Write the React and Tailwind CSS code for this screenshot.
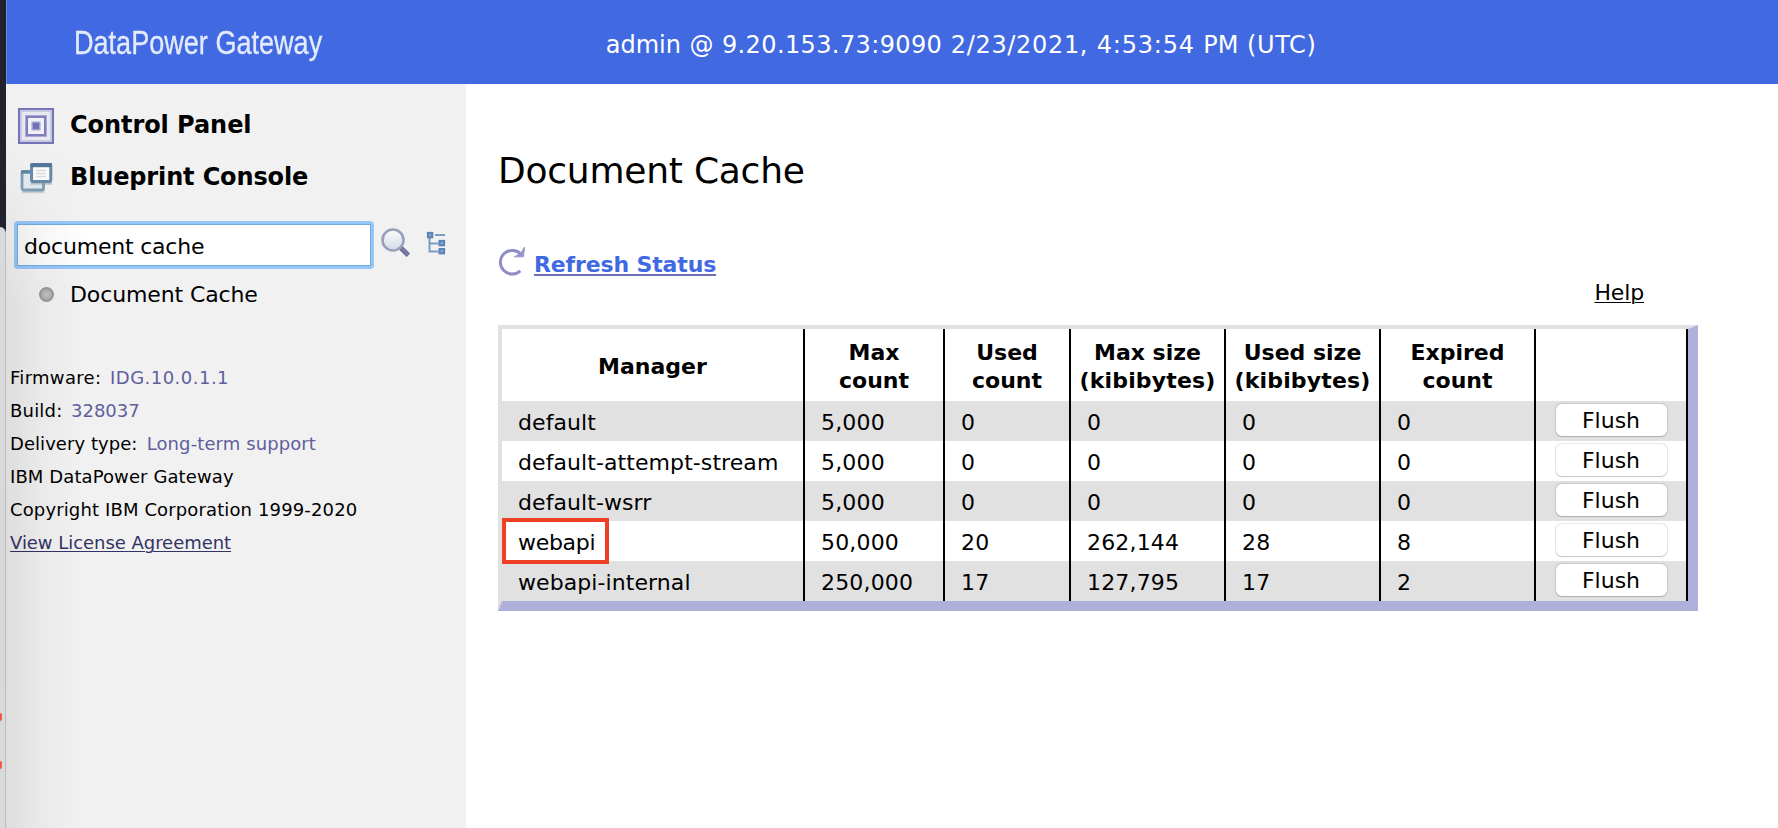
const COLUMNS = [
  ["Manager"],
  ["Max", "count"],
  ["Used", "count"],
  ["Max size", "(kibibytes)"],
  ["Used size", "(kibibytes)"],
  ["Expired", "count"],
  [],
];

const ROWS = [
  ["default", "5,000", "0", "0", "0", "0"],
  ["default-attempt-stream", "5,000", "0", "0", "0", "0"],
  ["default-wsrr", "5,000", "0", "0", "0", "0"],
  ["webapi", "50,000", "20", "262,144", "28", "8"],
  ["webapi-internal", "250,000", "17", "127,795", "17", "2"],
];

const GRID = "grid grid-cols-[303px_140px_126px_155px_155px_155px_152px]";

function ControlPanelIcon() {
  return (
    <svg className="mt-[2px] h-9 w-9 shrink-0" viewBox="0 0 36 36">
      <rect width="36" height="36" fill="#7474b8" />
      <rect x="2" y="2" width="32" height="32" fill="#c9c9e2" />
      <rect x="4" y="4" width="28" height="28" fill="#e8e8f2" />
      <rect x="7" y="7" width="22" height="22" fill="#a9a9d2" />
      <rect x="8" y="8" width="20" height="20" fill="#7e7ebd" />
      <rect x="10" y="10" width="16" height="16" fill="#f0f0f6" />
      <rect x="13.5" y="13.5" width="9" height="9" fill="#a3a3cf" />
      <rect x="15" y="15" width="6" height="6" fill="#6f6fb5" />
    </svg>
  );
}

function BlueprintIcon() {
  return (
    <svg className="mt-[4px] h-9 w-9 shrink-0" viewBox="0 0 36 36">
      <path d="M4 31h21.500v-8" fill="none" stroke="#9aa5ae" strokeOpacity=".4" strokeWidth="2.400" />
      <rect x="4" y="10.500" width="21.500" height="18.500" rx="1.800" fill="#e3ebf0" stroke="#7f9fb8" strokeWidth="2.800" />
      <path d="M3 11h12" stroke="#5f86a5" strokeWidth="3.400" />
      <path d="M12.500 22.600h21.500" stroke="#8d9aa5" strokeOpacity=".55" strokeWidth="2" />
      <rect x="13.600" y="3.600" width="19.200" height="17" rx="1.600" fill="#fbfcfc" stroke="#668baa" strokeWidth="3" />
      <path d="M12.500 4.200h21.500" stroke="#52799c" strokeWidth="4" />
      <path d="M18 9.500h10M18 12.500h10M18 15.500h10" stroke="#dcdcdc" strokeWidth="1.400" />
    </svg>
  );
}

function SearchIcon() {
  return (
    <svg className="h-[30px] w-[30px] shrink-0" viewBox="0 0 30 30">
      <defs>
        <linearGradient id="lens" x1="0" y1="0" x2="0" y2="1">
          <stop offset="0" stopColor="#fdfdfe" />
          <stop offset="1" stopColor="#d3d9e4" />
        </linearGradient>
      </defs>
      <path d="M18.5 18.5l8.800 8.800" stroke="#6b6b95" strokeWidth="4.800" />
      <path d="M20 19.500l7 7" stroke="#8787ac" strokeWidth="1.200" />
      <circle cx="12" cy="12" r="10.500" fill="url(#lens)" stroke="#9a9fbd" strokeWidth="2.600" />
    </svg>
  );
}

function TreeIcon() {
  return (
    <svg className="ml-[15px] h-6 w-5 shrink-0" viewBox="0 0 20 24">
      <path d="M3.500 5v15.500h9M3.500 12.500h9M9 4h10" fill="none" stroke="#7b9cc5" strokeWidth="2" />
      <rect x="1.900" y="1.900" width="4.400" height="4.400" fill="#86a4ca" stroke="#5c83b6" strokeWidth="2" />
      <rect x="13.500" y="9.900" width="4.600" height="4.400" fill="#86a4ca" stroke="#5c83b6" strokeWidth="2" />
      <rect x="13.500" y="18" width="4.600" height="4.400" fill="#86a4ca" stroke="#5c83b6" strokeWidth="2" />
    </svg>
  );
}

function RefreshIcon() {
  return (
    <svg className="h-8 w-7 shrink-0" viewBox="0 0 28 32">
      <path d="M22.300 24.800A11.800 11.800 0 1 1 23.500 9" fill="none" stroke="#8f8dc5" strokeWidth="3" />
      <path d="M26.600 1L25.400 10.800L16.400 10.800L22.600 7.400Z" fill="#9896c9" stroke="#9896c9" strokeWidth="1" />
    </svg>
  );
}

function Header() {
  return (
    <header className="flex h-[84px] border-l border-[#6a8aea] bg-[#4169e1] pl-[67px]">
      <div className="w-[531.7px] origin-left scale-x-[0.82] whitespace-nowrap font-['Liberation_Sans',sans-serif] text-[33px] leading-[86px] text-[#e4ebfd] [-webkit-text-stroke:0.3px_#e4ebfd]">
        DataPower Gateway
      </div>
      <div className="whitespace-pre text-2xl/[90px] text-white [word-spacing:0.9px]">
        admin @ <span className="tracking-[0.38px]">9.20.153.73:9090</span>{" "}
        <span className="tracking-[0.67px]">2/23/2021,</span>{" "}
        <span className="tracking-[0.8px]">4:53:54</span> PM{" "}
        <span className="tracking-[0.6px]">(UTC)</span>
      </div>
    </header>
  );
}

function Sidebar() {
  return (
    <aside className="relative w-[460px] shrink-0 bg-[#f1f1f1] pt-[15px]">
      <div className="pointer-events-none absolute inset-y-0 left-0 w-[76px] bg-linear-to-r from-black/8 via-black/3 via-45% to-transparent [mask-image:linear-gradient(to_bottom,transparent_50px,black_230px)]" />
      <div className="flex h-[52px] items-center pl-3">
        <ControlPanelIcon />
        <span className="pl-4 text-2xl font-bold tracking-[-0.06px]">Control Panel</span>
      </div>
      <div className="flex h-[52px] items-center pl-3">
        <BlueprintIcon />
        <span className="pl-4 text-2xl font-bold tracking-[-0.14px]">Blueprint Console</span>
      </div>
      <div className="mt-[18px] flex h-12 items-center pl-2">
        <div className="h-12 w-[360px] rounded-[4px] bg-[#96c5f7] p-[3px]">
          <div className="h-[42px] border border-[#74a9de] bg-linear-to-r from-[#f7f7f7] to-white to-20% pl-[6px] text-[22px] leading-[43px] tracking-[-0.2px]">
            document cache
          </div>
        </div>
        <div className="flex items-center pb-[4px] pl-[7px]">
          <SearchIcon />
          <TreeIcon />
        </div>
      </div>
      <div className="mt-[5px] flex h-10 items-center pl-[33px]">
        <span className="h-[15px] w-[15px] rounded-full border-2 border-[#999] bg-radial from-[#c4c4c4] to-[#a2a2a2]" />
        <span className="pl-[16px] text-[22px] tracking-[-0.12px]">Document Cache</span>
      </div>
      <div className="mt-[47px] pl-1 text-lg/[33px] [&_b]:font-normal [&_b]:text-[#5f5f9d]">
        <div>
          <span className="inline-block w-[100px] tracking-[0.3px]">Firmware:</span>
          <b className="tracking-[0.48px]">IDG.10.0.1.1</b>
        </div>
        <div>
          <span className="inline-block w-[61px] tracking-[0.2px]">Build:</span>
          <b>328037</b>
        </div>
        <div>
          <span className="inline-block w-[136.7px] tracking-[0.05px]">Delivery type:</span>
          <b className="tracking-[0.1px]">Long-term support</b>
        </div>
        <div className="tracking-[0.1px]">IBM DataPower Gateway</div>
        <div className="tracking-[0.13px]">Copyright IBM Corporation 1999-2020</div>
        <a className="tracking-[-0.04px] text-[#333366] underline decoration-1 underline-offset-2">View License Agreement</a>
      </div>
    </aside>
  );
}

function CacheTable() {
  return (
    <div className="w-[1200px] border-t-4 border-r-10 border-b-10 border-l-4 border-t-[#e1e1e1] border-r-[#b0b1da] border-b-[#b0b1da] border-l-[#e1e1e1] text-[22px]">
      <div className={GRID + " h-[72px]"}>
        {COLUMNS.map((lines, i) => (
          <div key={i} className="flex flex-col items-center justify-center border-r-2 border-black pt-[4px] leading-7 font-bold">
            {lines.map((line) => (
              <span key={line} className={line === "(kibibytes)" ? "tracking-[0.15px]" : ""}>{line}</span>
            ))}
          </div>
        ))}
      </div>
      {ROWS.map((row, r) => (
        <div key={row[0]} className={GRID + " h-10 odd:bg-white even:bg-[#e1e1e1]"}>
          {row.map((value, c) => (
            <div
              key={c}
              className={
                "relative border-r-2 border-black pt-1 pl-4 leading-9 " +
                (c > 0 ? "tracking-[0.17px]" : value === "webapi" ? "tracking-[-0.3px]" : "tracking-[0.08px]")
              }
            >
              {value}
              {r === 3 && c === 0 && (
                <span className="absolute -top-[3px] left-0 h-[46px] w-[107px] border-4 border-[#ee4027]" />
              )}
            </div>
          ))}
          <div className="flex justify-center border-r-2 border-black pt-[3px]">
            <button className="h-[32px] w-[111px] rounded-[6px] bg-white leading-[31px] shadow-[0_0_1px_0.5px_rgba(0,0,0,0.1),0_1px_1px_rgba(0,0,0,0.14)]">
              Flush
            </button>
          </div>
        </div>
      ))}
    </div>
  );
}

export default function App() {
  return (
    <div className="flex h-[828px] w-[1778px] overflow-hidden bg-white font-['DejaVu_Sans',Verdana,sans-serif] text-black">
      <div className="w-[6px] shrink-0 bg-[#212130] pt-[227px]">
        <div className="h-[601px] rounded-tr-[6px] border-r border-[#bdbdc0] bg-linear-to-b from-[#d9d9de] via-[#d6d9d8] via-60% to-[#dadada] pt-[486px]">
          <div className="h-2 w-[2px] rounded-r-full bg-[#ee5a4f]" />
          <div className="mt-10 h-2 w-[2px] rounded-r-full bg-[#ee5a4f]" />
        </div>
      </div>
      <div className="flex grow flex-col">
        <Header />
        <div className="flex grow">
          <Sidebar />
          <main className="pl-8">
            <h1 className="pt-[65px] text-4xl/[44px] tracking-[-0.23px]">Document Cache</h1>
            <div className="box-content flex h-8 w-[1200px] pt-[53px]">
              <RefreshIcon />
              <a className="pt-[4px] pl-[8px] text-[22px] leading-[30px] font-bold tracking-[-0.14px] text-[#4169e1] underline decoration-[#6f6fb7] decoration-2 underline-offset-2">
                Refresh Status
              </a>
            </div>
            <div className="flex h-[47px] w-[1146px] justify-end pt-px">
              <a className="text-[22px] leading-7 tracking-[-0.15px] underline decoration-1 underline-offset-2">Help</a>
            </div>
            <CacheTable />
          </main>
        </div>
      </div>
    </div>
  );
}
